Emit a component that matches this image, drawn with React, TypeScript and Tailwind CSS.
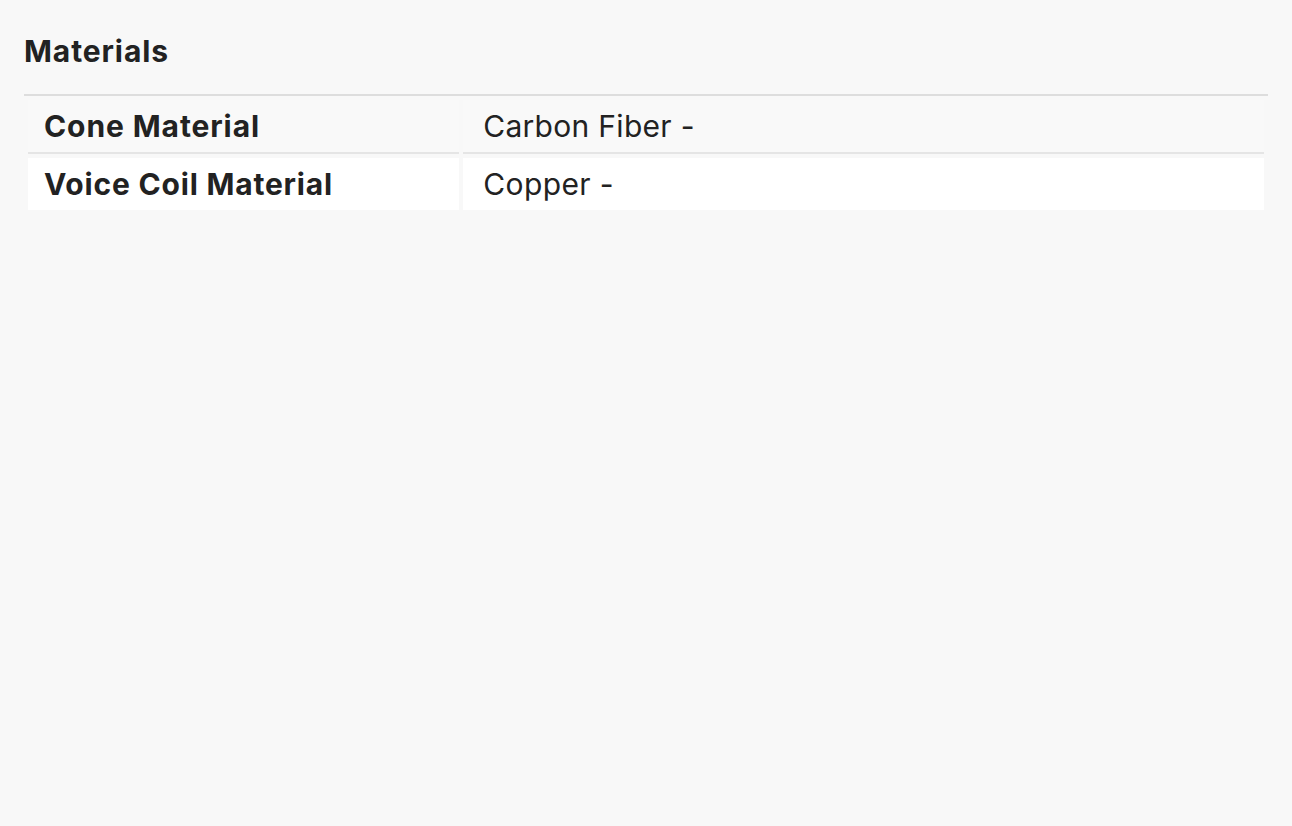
export default function App() {
  const font = { fontFamily: 'Inter, "Noto Sans", sans-serif' };
  return (
    <div className="min-h-[826px] w-full bg-[#f8f8f8] px-6 pt-[33px] text-[#222]" style={font}>
      <h2 className="mb-[25px] text-[30px] font-bold leading-[36px] tracking-[0.9px]">Materials</h2>
      <table className="w-full table-fixed border-separate border-spacing-[4px] border-t-2 border-[#dddddd]">
        <colgroup>
          <col className="w-[35%]" />
          <col />
        </colgroup>
        <tbody>
          <tr>
            <th className="h-[54px] border-b-2 border-[#e5e5e5] bg-[#f9f9f9] pl-4 text-left align-middle text-[30px] font-bold tracking-[0.9px]">
              Cone Material
            </th>
            <td className="h-[54px] border-b-2 border-[#e5e5e5] bg-[#f9f9f9] pl-5 align-middle text-[30px] font-normal tracking-[0.3px]">
              Carbon Fiber -
            </td>
          </tr>
          <tr>
            <th className="h-[52px] bg-white pl-4 text-left align-middle text-[30px] font-bold tracking-[0.8px]">
              Voice Coil Material
            </th>
            <td className="h-[52px] bg-white pl-5 align-middle text-[30px] font-normal tracking-[0.4px]">Copper -</td>
          </tr>
        </tbody>
      </table>
    </div>
  );
}
